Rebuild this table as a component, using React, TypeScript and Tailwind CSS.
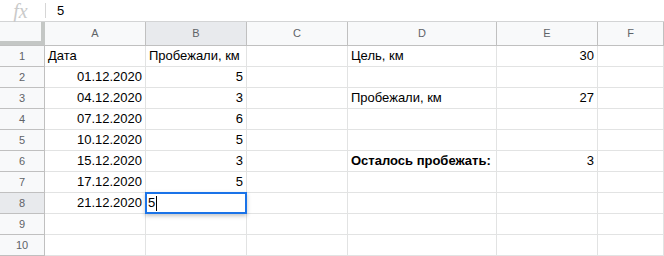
import React from 'react'

type Cell = { text?: string; align?: 'left' | 'right'; bold?: boolean }

const columns = [
  { key: 'A', width: 'w-[101px]' },
  { key: 'B', width: 'w-[101px]' },
  { key: 'C', width: 'w-[101px]' },
  { key: 'D', width: 'w-[149px]' },
  { key: 'E', width: 'w-[101px]' },
  { key: 'F', width: 'flex-1' },
]

// Sheet contents by row, then column letter
const data: Record<number, Record<string, Cell>> = {
  1: {
    A: { text: 'Дата' },
    B: { text: 'Пробежали, км' },
    D: { text: 'Цель, км' },
    E: { text: '30', align: 'right' },
  },
  2: { A: { text: '01.12.2020', align: 'right' }, B: { text: '5', align: 'right' } },
  3: {
    A: { text: '04.12.2020', align: 'right' },
    B: { text: '3', align: 'right' },
    D: { text: 'Пробежали, км' },
    E: { text: '27', align: 'right' },
  },
  4: { A: { text: '07.12.2020', align: 'right' }, B: { text: '6', align: 'right' } },
  5: { A: { text: '10.12.2020', align: 'right' }, B: { text: '5', align: 'right' } },
  6: {
    A: { text: '15.12.2020', align: 'right' },
    B: { text: '3', align: 'right' },
    D: { text: 'Осталось пробежать:', bold: true },
    E: { text: '3', align: 'right' },
  },
  7: { A: { text: '17.12.2020', align: 'right' }, B: { text: '5', align: 'right' } },
  8: { A: { text: '21.12.2020', align: 'right' } },
}

const rows = [1, 2, 3, 4, 5, 6, 7, 8, 9, 10]
const activeRow = 8
const activeCol = 'B'

function FormulaBar() {
  return (
    <div className="flex h-[22px] items-center border-b border-[#d3d4d5] bg-white">
      <div className="flex w-[45px] items-center justify-center">
        <span className="pr-1 text-[20px] italic leading-none text-[#cacaca] [font-family:'Liberation_Serif',serif]">fx</span>
      </div>
      <div className="h-[15px] w-px bg-[#d6d6d6]" />
      <span className="pl-[11px] text-[13px] text-black">5</span>
    </div>
  )
}

function HeaderRow() {
  return (
    <div className="flex h-[24px]">
      <div className="relative w-[45px] border-b border-[#c0c0c0] bg-[#f8f9fa]">
        <div className="absolute right-0 top-0 h-full w-[4px] bg-[#c4c7c5]" />
        <div className="absolute bottom-0 left-0 h-[4px] w-full bg-[#c4c7c5]" />
      </div>
      {columns.map((c) => (
        <div
          key={c.key}
          className={`${c.width} flex items-center justify-center border-b border-r border-[#c0c0c0] text-[11px] text-[#5f6368] ${
            c.key === activeCol ? 'bg-[#e8eaed]' : 'bg-[#f8f9fa]'
          }`}
        >
          {c.key}
        </div>
      ))}
    </div>
  )
}

function SheetRow({ n }: { n: number }) {
  const cells = data[n] ?? {}
  return (
    <div className="flex h-[21px]">
      <div
        className={`flex w-[45px] items-center justify-center border-b border-r border-[#c0c0c0] text-[11px] text-[#5f6368] ${
          n === activeRow ? 'bg-[#e8eaed]' : 'bg-[#f8f9fa]'
        }`}
      >
        {n}
      </div>
      {columns.map((c) => {
        const cell = cells[c.key]
        const editing = n === activeRow && c.key === activeCol
        return (
          <div
            key={c.key}
            className={`${c.width} relative flex items-center overflow-visible border-b border-r border-[#e2e3e3] px-[3px] text-[13px] text-black ${
              cell?.align === 'right' ? 'justify-end' : 'justify-start'
            } ${cell?.bold ? 'font-bold' : ''}`}
          >
            {cell?.text}
            {editing && (
              <div className="absolute -left-px -top-px z-10 flex h-[22px] w-[102px] items-center border-2 border-[#1a73e8] bg-white pl-[1px] shadow-[0_2px_4px_rgba(60,64,67,0.3)]">
                <span>5</span>
                <span className="ml-px h-[15px] w-px bg-black" />
              </div>
            )}
          </div>
        )
      })}
    </div>
  )
}

export default function App() {
  return (
    <div className="h-[256px] w-[664px] overflow-hidden bg-white [font-family:'Liberation_Sans',Arial,sans-serif]">
      <FormulaBar />
      <HeaderRow />
      {rows.map((n) => (
        <SheetRow key={n} n={n} />
      ))}
    </div>
  )
}
